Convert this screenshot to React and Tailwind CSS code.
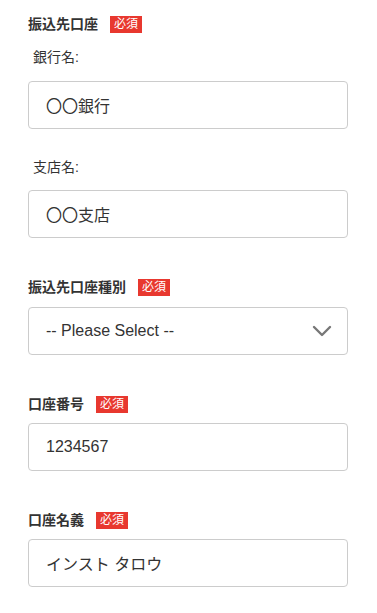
import React from "react";

const font = { fontFamily: '"Liberation Sans", "Noto Sans CJK JP", sans-serif' };

const Badge = () => (
  <span className="inline-flex items-center h-[17px] px-[4px] bg-[#e8382f] text-white text-[12px] leading-none">
    必須
  </span>
);

const Heading = ({ children, className = "" }) => (
  <div className={`flex items-center gap-[12px] h-[20px] ${className}`}>
    <span className="text-[14px] font-bold text-[#333]">{children}</span>
    <Badge />
  </div>
);

const Field = ({ value, className = "" }) => (
  <input
    type="text"
    defaultValue={value}
    className={`block w-full h-[48px] px-[17px] border border-[#cccccc] rounded-[4px] text-[16px] text-[#333] bg-white outline-none ${className}`}
  />
);

export default function App() {
  return (
    <div className="bg-white min-h-[613px] px-[28px] pt-[14px] pr-[29px]" style={font}>
      {/* 振込先口座 */}
      <Heading>振込先口座</Heading>
      <div className="mt-[13px] ml-[5px] h-[20px] leading-[20px] text-[14px] text-[#333]">銀行名:</div>
      <Field value="〇〇銀行" className="mt-[14px]" />
      <div className="mt-[28px] ml-[5px] h-[20px] leading-[20px] text-[14px] text-[#333]">支店名:</div>
      <Field value="〇〇支店" className="mt-[13px]" />

      {/* 口座種別 */}
      <Heading className="mt-[39px]">振込先口座種別</Heading>
      <div className="relative mt-[10px] h-[48px] border border-[#cccccc] rounded-[4px] flex items-center px-[17px] text-[16px] text-[#333]">
        <span>-- Please Select --</span>
        <svg
          className="absolute right-[15px] top-1/2 -translate-y-1/2"
          width="20"
          height="12"
          viewBox="0 0 20 12"
          fill="none"
        >
          <path d="M2 2l8 8 8-8" stroke="#777" strokeWidth="2.4" strokeLinecap="round" strokeLinejoin="round" />
        </svg>
      </div>

      {/* 口座番号 */}
      <Heading className="mt-[39px]">口座番号</Heading>
      <Field value="1234567" className="mt-[9px]" />

      {/* 口座名義 */}
      <Heading className="mt-[39px]">口座名義</Heading>
      <Field value="インスト タロウ" className="mt-[9px]" />
    </div>
  );
}
